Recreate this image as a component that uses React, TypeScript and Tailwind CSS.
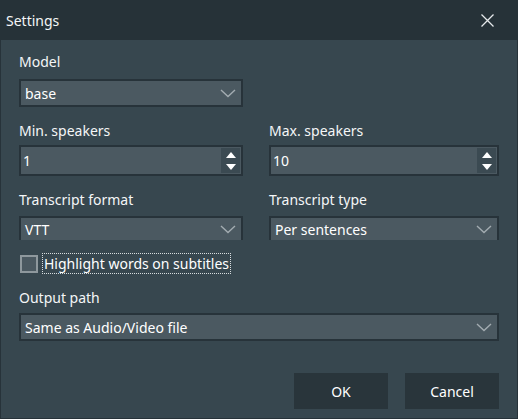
import React from 'react';

const font = { fontFamily: '"Noto Sans", "Open Sans", sans-serif' };

function Chevron() {
    return (
        <svg width="16" height="9" viewBox="0 0 16 9" className="shrink-0">
            <path d="M1 1 L8 7.5 L15 1" fill="none" stroke="#a3acb1" strokeWidth="1.4" />
        </svg>
    );
}

function Combo({ value, height = 'h-[28px]', noBottom = false }: { value: string; height?: string; noBottom?: boolean }) {
    return (
        <div
            className={`flex items-center justify-between ${height} bg-[#4b5961] border-2 border-[#27333a] ${noBottom ? 'border-b-0' : ''} pl-[4px] pr-[5px] text-white text-[14px]`}
        >
            <span>{value}</span>
            <Chevron />
        </div>
    );
}

function SpinBox({ value }: { value: string }) {
    return (
        <div className="flex items-stretch h-[31px] bg-[#4b5961] border-2 border-[#27333a] text-white text-[14px]">
            <div className="flex-1 flex items-center pl-[2px]">{value}</div>
            <div className="w-[19px] mr-[1px] my-[1px] flex flex-col items-center justify-center gap-[6px] bg-[#3b4a52]">
                <svg width="10" height="6" viewBox="0 0 10 6">
                    <path d="M0 6 L5 0 L10 6 Z" fill="#ffffff" />
                </svg>
                <svg width="10" height="6" viewBox="0 0 10 6">
                    <path d="M0 0 L10 0 L5 6 Z" fill="#ffffff" />
                </svg>
            </div>
        </div>
    );
}

function Label({ children }: { children: React.ReactNode }) {
    return <div className="h-[20px] leading-[20px] text-[14px] text-[#f4f6f7]">{children}</div>;
}

export default function App() {
    return (
        <div className="w-[518px] h-[419px] flex flex-col bg-[#37474f]" style={font}>
            {/* Title bar */}
            <div className="h-[40px] shrink-0 flex items-center justify-between bg-[#263238] pl-[6px] pr-[24px]">
                <span className="text-[14px] text-[#f4f6f7]">Settings</span>
                <svg width="13" height="13" viewBox="0 0 13 13">
                    <path d="M0.5 0.5 L12.5 12.5 M12.5 0.5 L0.5 12.5" stroke="#e6e9eb" strokeWidth="1.3" />
                </svg>
            </div>

            {/* Body */}
            <div className="flex-1 flex flex-col border-x border-b border-[#27333a] pt-[12px] pl-[18px] pr-[18px]">
                <Label>Model</Label>
                <div className="w-[224px] mt-[7px]">
                    <Combo value="base" />
                </div>

                <div className="grid grid-cols-[224px_230px] gap-x-[26px] mt-[14px]">
                    <div>
                        <Label>Min. speakers</Label>
                        <div className="mt-[4px]">
                            <SpinBox value="1" />
                        </div>
                    </div>
                    <div>
                        <Label>Max. speakers</Label>
                        <div className="mt-[4px]">
                            <SpinBox value="10" />
                        </div>
                    </div>
                </div>

                <div className="grid grid-cols-[224px_230px] gap-x-[26px] mt-[14px]">
                    <div>
                        <Label>Transcript format</Label>
                        <div className="mt-[6px]">
                            <Combo value="VTT" height="h-[24px]" noBottom />
                        </div>
                    </div>
                    <div>
                        <Label>Transcript type</Label>
                        <div className="mt-[6px]">
                            <Combo value="Per sentences" height="h-[24px]" noBottom />
                        </div>
                    </div>
                </div>

                {/* Checkbox */}
                <div className="flex items-center h-[21px] mt-[13px]">
                    <div className="w-[18px] h-[18px] ml-[1px] border-2 border-[#8e989d] bg-[#4b5961]" />
                    <div className="ml-[4px] h-[21px] flex items-center px-[1px] border border-dotted border-[#d8dde0] text-[14px] text-white">
                        Highlight words on subtitles
                    </div>
                </div>

                <div className="mt-[14px]">
                    <Label>Output path</Label>
                </div>
                <div className="mt-[5px]">
                    <Combo value="Same as Audio/Video file" />
                </div>

                {/* Buttons */}
                <div className="flex justify-end gap-[17px] mt-[32px]">
                    <button className="w-[94px] h-[36px] bg-[#29353b] text-white text-[14px]">OK</button>
                    <button className="w-[94px] h-[36px] bg-[#29353b] text-white text-[14px]">Cancel</button>
                </div>
            </div>
        </div>
    );
}
